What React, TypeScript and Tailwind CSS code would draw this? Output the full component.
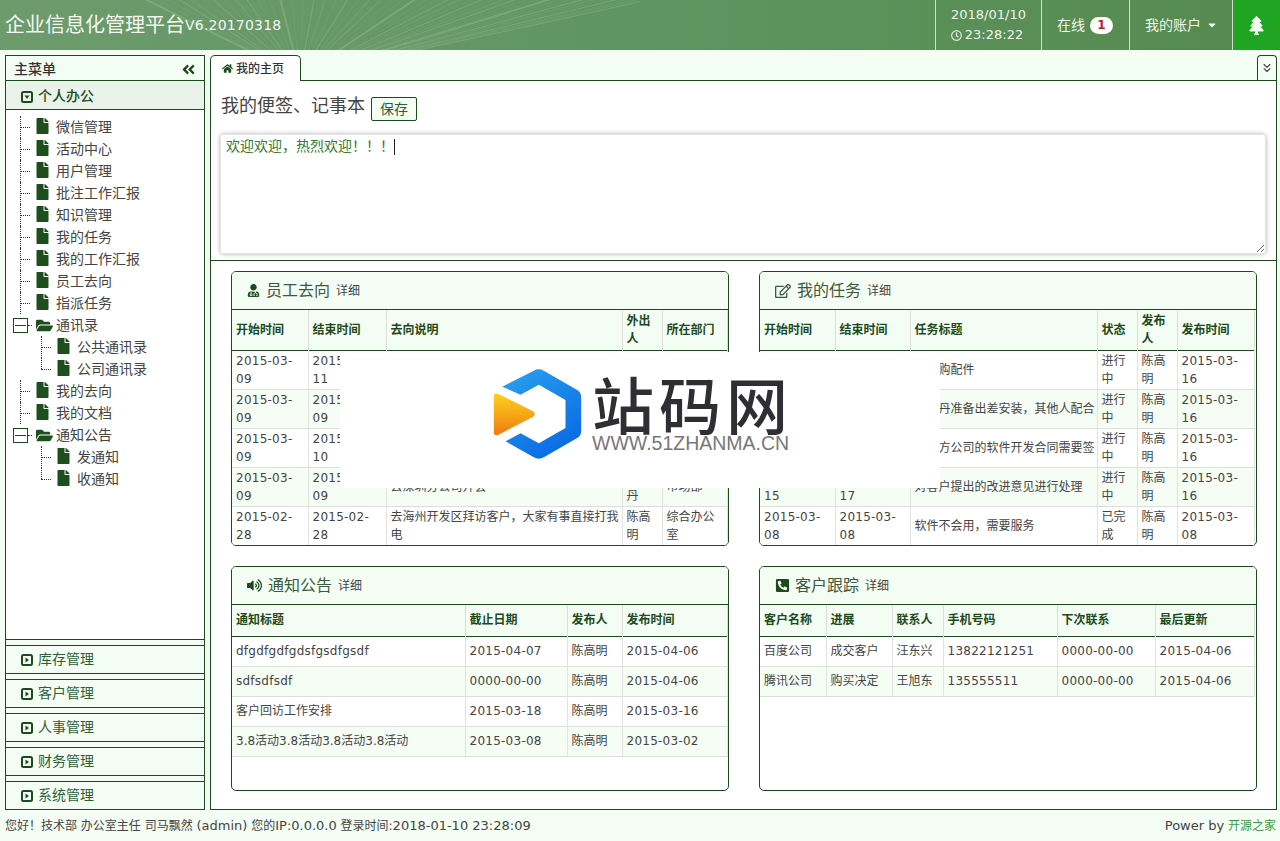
import type { ReactNode } from "react";
import {
  FaAngleDoubleLeft,
  FaCaretDown,
  FaFile,
  FaFolderOpen,
  FaHome,
  FaPhoneSquareAlt,
  FaRegClock,
  FaRegEdit,
  FaTree,
  FaUserMd,
  FaVolumeUp,
} from "react-icons/fa";
import { LuChevronsDown } from "react-icons/lu";

type TreeItem = { label: string; level: 0 | 1; folder?: boolean; last?: boolean };

const TREE: TreeItem[] = [
  { label: "微信管理", level: 0 },
  { label: "活动中心", level: 0 },
  { label: "用户管理", level: 0 },
  { label: "批注工作汇报", level: 0 },
  { label: "知识管理", level: 0 },
  { label: "我的任务", level: 0 },
  { label: "我的工作汇报", level: 0 },
  { label: "员工去向", level: 0 },
  { label: "指派任务", level: 0 },
  { label: "通讯录", level: 0, folder: true },
  { label: "公共通讯录", level: 1 },
  { label: "公司通讯录", level: 1, last: true },
  { label: "我的去向", level: 0 },
  { label: "我的文档", level: 0 },
  { label: "通知公告", level: 0, folder: true },
  { label: "发通知", level: 1 },
  { label: "收通知", level: 1, last: true },
];

const CLOSED_MENUS = ["库存管理", "客户管理", "人事管理", "财务管理", "系统管理"];

const OUT_COLS = ["w-[76px]", "w-[78px]", "w-[236px]", "w-[40px]", "w-[65px]"];
const OUT_HEAD = ["开始时间", "结束时间", "去向说明", "外出人", "所在部门"];
const OUT_ROWS = [
  ["2015-03-09", "2015-03-11", "", "", ""],
  ["2015-03-09", "2015-03-09", "", "", ""],
  ["2015-03-09", "2015-03-10", "", "", ""],
  ["2015-03-09", "2015-03-09", "去深圳分公司开会", "\u3000\u3000丹", "市场部"],
  ["2015-02-28", "2015-02-28", "去海州开发区拜访客户\uFF0C大家有事直接打我电", "陈高明", "综合办公室"],
];

const TASK_COLS = ["w-[75px]", "w-[75px]", "w-[187px]", "w-[40px]", "w-[40px]", "w-[77px]"];
const TASK_HEAD = ["开始时间", "结束时间", "任务标题", "状态", "发布人", "发布时间"];
const TASK_ROWS = [
  ["", "", "\u3000\u3000购配件", "进行中", "陈高明", "2015-03-16"],
  ["", "", "\u3000\u3000丹准备出差安装\uFF0C其他人配合", "进行中", "陈高明", "2015-03-16"],
  ["", "", "\u3000\u3000方公司的软件开发合同需要签", "进行中", "陈高明", "2015-03-16"],
  ["2015-03-15", "2015-03-17", "对客户提出的改进意见进行处理", "进行中", "陈高明", "2015-03-16"],
  ["2015-03-08", "2015-03-08", "软件不会用\uFF0C需要服务", "已完成", "陈高明", "2015-03-08"],
];

const NOTICE_COLS = ["w-[233px]", "w-[102px]", "w-[55px]", "w-[105px]"];
const NOTICE_HEAD = ["通知标题", "截止日期", "发布人", "发布时间"];
const NOTICE_ROWS = [
  ["dfgdfgdfgdsfgsdfgsdf", "2015-04-07", "陈高明", "2015-04-06"],
  ["sdfsdfsdf", "0000-00-00", "陈高明", "2015-04-06"],
  ["客户回访工作安排", "2015-03-18", "陈高明", "2015-03-16"],
  ["3.8活动3.8活动3.8活动3.8活动", "2015-03-08", "陈高明", "2015-03-02"],
];

const CUSTOMER_COLS = ["w-[66px]", "w-[66px]", "w-[51px]", "w-[114px]", "w-[98px]", "w-[99px]"];
const CUSTOMER_HEAD = ["客户名称", "进展", "联系人", "手机号码", "下次联系", "最后更新"];
const CUSTOMER_ROWS = [
  ["百度公司", "成交客户", "汪东兴", "13822121251", "0000-00-00", "2015-04-06"],
  ["腾讯公司", "购买决定", "王旭东", "135555511", "0000-00-00", "2015-04-06"],
];

function HeaderStreaks() {
  const lines = [];
  for (let i = 0; i < 46; i++) {
    const x = 190 + i * 8;
    const bend = (x - 300) * 0.5;
    lines.push(
      <path
        key={i}
        d={`M${300 + (x - 300) * 0.25} 62 Q${x - bend * 0.3} 30 ${x + bend} -6`}
        stroke="#ffffff"
        strokeOpacity={i % 3 === 0 ? 0.14 : 0.05}
        strokeWidth={i % 4 === 0 ? 2 : 1}
        fill="none"
      />,
    );
  }
  return (
    <svg className="absolute left-0 top-0 pointer-events-none" width="640" height="50">
      {lines}
    </svg>
  );
}

// caret-in-a-square marker of the accordion heads
function CaretBox({ open }: { open?: boolean }) {
  return (
    <svg width="12" height="12" viewBox="0 0 12 12" className="shrink-0">
      <rect x="1" y="1" width="10" height="10" rx="1.5" fill="none" stroke="#1d4a1d" strokeWidth="2" />
      <path d={open ? "M3.5 4.5 H8.5 L6 8 Z" : "M4.5 3.5 V8.5 L8 6 Z"} fill="#1d4a1d" />
    </svg>
  );
}

function TreeRow({ item }: { item: TreeItem }) {
  if (item.folder) {
    return (
      <div className="h-[22px] flex items-center pl-[7px]">
        <div className="w-[15px] h-[15px] border border-[#1d4a1d] flex items-center justify-center">
          <div className="w-[11px] border-t border-[#1d4a1d]" />
        </div>
        <div className="w-[4px] border-t border-dotted border-[#333]" />
        <FaFolderOpen className="ml-[4px] text-[#1c4f1c] text-[17px] w-[17px]" />
        <span className="ml-[3px] text-[14px] text-[#444]">{item.label}</span>
      </div>
    );
  }
  return (
    <div className={`h-[22px] flex items-center ${item.level === 1 ? "pl-[35px]" : "pl-[14px]"}`}>
      <div className="w-[10px] h-full relative">
        <div className={`border-l border-dotted border-[#333] ${item.last ? "h-1/2" : "h-full"}`} />
        <div className="absolute left-0 top-1/2 w-full border-t border-dotted border-[#333]" />
      </div>
      <FaFile className="ml-[6px] text-[#1c4f1c] text-[16px] w-[13px] -mt-[2px]" />
      <span className="ml-[7px] text-[14px] text-[#444]">{item.label}</span>
    </div>
  );
}

function Sidebar() {
  return (
    <div className="w-[200px] border border-[#1d4a1d] flex flex-col">
      <div className="h-[25px] flex items-center justify-between pl-[8px] pr-[8px] pt-[2px] border-b border-[#1d4a1d] bg-[#f4fdf3]">
        <span className="text-[14px] font-medium text-[#333]">主菜单</span>
        <FaAngleDoubleLeft className="text-[#1d4a1d] text-[15px]" />
      </div>
      <div className="h-[29px] flex items-center pl-[15px] pt-[3px] bg-[#e9f3e9] border-b border-[#1d4a1d]">
        <CaretBox open />
        <span className="ml-[5px] text-[14px] font-medium text-[#1d4a1d]">个人办公</span>
      </div>
      <div className="flex-1 bg-white pt-[6px] border-b border-[#1d4a1d]">
        {TREE.map((item) => (
          <TreeRow key={item.label} item={item} />
        ))}
      </div>
      {CLOSED_MENUS.map((name, i) => (
        <div
          key={name}
          className={`mt-[5px] border-t border-[#1d4a1d] flex items-center pl-[15px] bg-[#f4fdf3] ${
            i < CLOSED_MENUS.length - 1 ? "h-[29px] border-b" : "h-[28px]"
          }`}
        >
          <CaretBox />
          <span className="ml-[5px] text-[14px] text-[#2f5f35]">{name}</span>
        </div>
      ))}
    </div>
  );
}

interface TableProps {
  cols: string[];
  head: string[];
  rows: string[][];
  headHeight: string;
  rowHeight: string;
}

function DataTable({ cols, head, rows, headHeight, rowHeight }: TableProps) {
  return (
    <table className="table-fixed border-collapse text-[12px] leading-[18px]">
      <thead>
        <tr className={`${headHeight} bg-[#f4fdf3] border-b border-[#1d4a1d]`}>
          {head.map((h, i) => (
            <th key={h} className={`${cols[i]} pl-[4px] pr-[3px] py-0 font-bold text-left text-[#1d4a1d] border-r border-[#ddd] break-all`}>
              {h}
            </th>
          ))}
        </tr>
      </thead>
      <tbody>
        {rows.map((row, r) => (
          <tr key={r} className={`${rowHeight} border-b border-[#ddd] ${r % 2 === 1 ? "bg-[#f5fdf5]" : "bg-white"}`}>
            {row.map((cell, c) => (
              <td
                key={c}
                className={`pl-[4px] py-0 text-[#444] border-r border-[#e2e2e2] ${
                  /^[\x00-\x7f]+$/.test(cell) ? "pr-[3px] tracking-[0.25px]" : "pr-[1px]"
                }`}
              >
                {cell}
              </td>
            ))}
          </tr>
        ))}
      </tbody>
    </table>
  );
}

function Card({ icon, title, children }: { icon: ReactNode; title: string; children: ReactNode }) {
  return (
    <div className="border border-[#1d4a1d] rounded-[5px] overflow-hidden bg-white">
      <div className="h-[38px] flex items-center pl-[15px] bg-[#f4fdf3] border-b border-[#1d4a1d]">
        {icon}
        <span className="ml-[6px] text-[16px] text-[#3c5a40]">{title}</span>
        <span className="ml-[6px] text-[12px] text-[#444]">详细</span>
      </div>
      {children}
    </div>
  );
}

function Logo() {
  return (
    <div className="absolute left-[340px] top-[352px] w-[600px] h-[136px] bg-white flex items-start pl-[153px] pt-[16px]">
      <svg width="89" height="92" viewBox="68 52 266 276" className="shrink-0">
        <defs>
          <linearGradient id="hexBlue" x1="0" y1="0" x2="0.6" y2="1">
            <stop offset="0" stopColor="#2ba3ee" />
            <stop offset="1" stopColor="#0b6be4" />
          </linearGradient>
          <linearGradient id="playOrange" x1="0" y1="0" x2="0" y2="1">
            <stop offset="0" stopColor="#ffd01f" />
            <stop offset="1" stopColor="#ee7d10" />
          </linearGradient>
        </defs>
        <path
          d="M95 108 L190 60 Q205 52 220 60 L320 118 Q332 125 332 140 V240 Q332 255 320 262 L220 320 Q205 328 190 320 L105 272 L150 248 L205 278 L285 232 V148 L205 102 L150 132 Z"
          fill="url(#hexBlue)"
        />
        <path d="M70 138 Q70 124 84 130 L188 182 Q198 190 188 198 L84 252 Q70 258 70 244 Z" fill="url(#playOrange)" />
      </svg>
      <div className="ml-[10px] mt-[6px] w-[204px] flex flex-col">
        <span className="text-[62px] leading-[58px] tracking-[5px] font-medium text-[#2f2f33] whitespace-nowrap font-['Noto_Sans_CJK_SC',sans-serif]">
          站码网
        </span>
        <span className="mt-[2px] text-[19.5px] leading-[18px] text-[#777] whitespace-nowrap font-['Liberation_Sans',sans-serif]">
          WWW.51ZHANMA.CN
        </span>
      </div>
    </div>
  );
}

export default function App() {
  return (
    <div className="relative w-[1280px] h-[841px] overflow-hidden flex flex-col bg-[#f4fdf3] font-['DejaVu_Sans','Noto_Sans_CJK_SC',sans-serif]">
      <header className="relative h-[50px] shrink-0 flex bg-gradient-to-r from-[#6d9b6d] via-[#5f9560] to-[#55894f] text-white">
        <HeaderStreaks />
        <div className="relative flex-1 flex items-center pl-[5px]">
          <span className="text-[20px] text-[#f2f7f0]">企业信息化管理平台</span>
          <span className="text-[14px] tracking-[0.2px] text-[#f2f7f0]">V6.20170318</span>
        </div>
        <div className="relative w-[106px] border-l border-[#cfe0cc] flex flex-col items-center justify-center text-[13px] leading-[20px] text-[#eef5ec]">
          <span>2018/01/10</span>
          <span className="flex items-center gap-[3px] -ml-[3px]">
            <FaRegClock className="text-[11px]" />
            23:28:22
          </span>
        </div>
        <div className="relative w-[88px] border-l border-[#cfe0cc] flex items-center pl-[15px] text-[14px] text-[#eef5ec]">
          <span>在线</span>
          <span className="ml-[5px] w-[23px] h-[17px] rounded-full bg-white text-[#c0143c] text-[12px] font-bold flex items-center justify-center">
            1
          </span>
        </div>
        <div className="relative w-[103px] border-l border-[#cfe0cc] flex items-center pl-[15px] text-[14px] text-[#eef5ec]">
          <span>我的账户</span>
          <FaCaretDown className="ml-[5px] text-[12px]" />
        </div>
        <div className="relative w-[48px] border-l border-[#cfe0cc] bg-[#1fa521] flex items-center justify-center">
          <FaTree className="text-[#f4fdf3] text-[19px]" />
        </div>
      </header>

      <div className="flex-1 min-h-0 flex pt-[5px] pl-[5px] pr-[3px]">
        <Sidebar />
        <main className="ml-[5px] flex-1 flex flex-col min-w-0">
          <div className="h-[25px] shrink-0 flex items-start justify-between">
            <div className="w-[91px] h-[26px] border border-b-0 border-[#1d4a1d] rounded-t-[5px] bg-white flex items-center pl-[11px] gap-[3px] relative z-10">
              <FaHome className="text-[#1d4a1d] text-[11px]" />
              <span className="text-[12px] font-medium text-[#333]">我的主页</span>
            </div>
            <div className="w-[20px] h-[25px] border border-b-0 border-[#1d4a1d] rounded-t-[4px] flex items-center justify-center">
              <LuChevronsDown className="text-[#444] text-[14px]" />
            </div>
          </div>
          <div className="flex-1 min-h-0 border border-[#1d4a1d] bg-white flex flex-col">
            <section className="h-[180px] shrink-0 border-b border-[#1d4a1d] px-[9px] pt-[13px]">
              <div className="flex items-end h-[27px]">
                <span className="ml-[1px] text-[18px] leading-[24px] mb-[3px] text-[#444]">我的便签、记事本</span>
                <button className="ml-[6px] w-[46px] h-[24px] border border-[#1d4a1d] rounded-[2px] bg-[#f4fdf3] text-[14px] text-[#2f5f35]">
                  保存
                </button>
              </div>
              <div className="mt-[13px] w-[1046px] h-[120px] resize overflow-auto border border-[#e4e4e4] rounded-[3px] shadow-[0_0_4px_rgba(60,90,60,0.45)] px-[5px] pt-[1px] text-[14px] leading-[20px] text-[#2f7a3a]">
                欢迎欢迎{"\uFF0C"}热烈欢迎{"\uFF01\uFF01\uFF01"}
                <span className="inline-block w-px h-[16px] bg-[#222] align-middle" />
              </div>
            </section>
            <section className="flex-1 min-h-0 grid grid-cols-[498px_498px] grid-rows-[275px_225px] gap-x-[30px] gap-y-[20px] pt-[10px] pl-[20px]">
              <Card icon={<FaUserMd className="text-[#1d4a1d] text-[13px]" />} title="员工去向">
                <DataTable cols={OUT_COLS} head={OUT_HEAD} rows={OUT_ROWS} headHeight="h-[40px]" rowHeight="h-[39px]" />
              </Card>
              <Card icon={<FaRegEdit className="text-[#3c5a40] text-[16px]" />} title="我的任务">
                <DataTable cols={TASK_COLS} head={TASK_HEAD} rows={TASK_ROWS} headHeight="h-[40px]" rowHeight="h-[39px]" />
              </Card>
              <Card icon={<FaVolumeUp className="text-[#1d4a1d] text-[15px]" />} title="通知公告">
                <DataTable cols={NOTICE_COLS} head={NOTICE_HEAD} rows={NOTICE_ROWS} headHeight="h-[31px]" rowHeight="h-[30px]" />
              </Card>
              <Card icon={<FaPhoneSquareAlt className="text-[#1d4a1d] text-[15px] -mr-[1px]" />} title="客户跟踪">
                <DataTable cols={CUSTOMER_COLS} head={CUSTOMER_HEAD} rows={CUSTOMER_ROWS} headHeight="h-[31px]" rowHeight="h-[30px]" />
              </Card>
            </section>
          </div>
        </main>
      </div>

      <footer className="h-[31px] shrink-0 flex items-center justify-between pl-[5px] pr-[4px] text-[12px] text-[#444]">
        <span>
          您好{"\uFF01"}技术部 办公室主任 司马飘然 <span className="text-[13px]">(admin)</span> 您的
          <span className="text-[13px]">IP:0.0.0.0</span> 登录时间:
          <span className="text-[13px]">2018-01-10 23:28:09</span>
        </span>
        <span>
          <span className="text-[13px]">Power by</span> <span className="text-[#3f9a3f]">开源之家</span>
        </span>
      </footer>

      <Logo />
    </div>
  );
}
